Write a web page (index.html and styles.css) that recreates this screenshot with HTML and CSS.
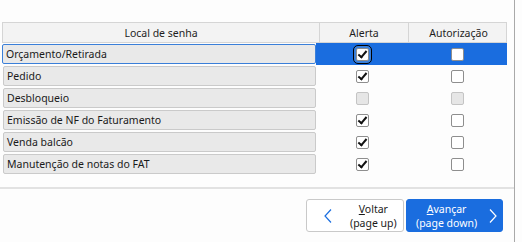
FILE: index.html
```html
<!DOCTYPE html>
<html>
<head>
<meta charset="utf-8">
<link rel="stylesheet" href="styles.css">
</head>
<body>
<div class="panel">
  <div class="grid">
    <div class="head">
      <div class="hc c1">Local de senha</div>
      <div class="hc c2">Alerta</div>
      <div class="hc c3">Autorização</div>
    </div>
    <div class="row sel">
      <div class="lbl focus">Orçamento/Retirada</div>
      <div class="cell"><span class="cb on fcs"></span></div>
      <div class="cell"><span class="cb"></span></div>
    </div>
    <div class="row">
      <div class="lbl">Pedido</div>
      <div class="cell"><span class="cb on"></span></div>
      <div class="cell"><span class="cb"></span></div>
    </div>
    <div class="row">
      <div class="lbl">Desbloqueio</div>
      <div class="cell"><span class="cb dis"></span></div>
      <div class="cell"><span class="cb dis"></span></div>
    </div>
    <div class="row">
      <div class="lbl">Emissão de NF do Faturamento</div>
      <div class="cell"><span class="cb on"></span></div>
      <div class="cell"><span class="cb"></span></div>
    </div>
    <div class="row">
      <div class="lbl">Venda balcão</div>
      <div class="cell"><span class="cb on"></span></div>
      <div class="cell"><span class="cb"></span></div>
    </div>
    <div class="row">
      <div class="lbl">Manutenção de notas do FAT</div>
      <div class="cell"><span class="cb on"></span></div>
      <div class="cell"><span class="cb"></span></div>
    </div>
  </div>
  <div class="footer">
    <button class="btn back">
      <svg class="chev" width="8" height="14" viewBox="0 0 8 14"><path d="M7 0.5 L1 7 L7 13.5" fill="none" stroke="#1a6ee0" stroke-width="1.2"/></svg>
      <span class="btxt"><u>V</u>oltar<br>(page up)</span>
    </button>
    <button class="btn next">
      <span class="btxt"><u>A</u>vançar<br>(page down)</span>
      <svg class="chev" width="8" height="14" viewBox="0 0 8 14"><path d="M1 0.5 L7 7 L1 13.5" fill="none" stroke="#ffffff" stroke-width="1.2"/></svg>
    </button>
  </div>
</div>
</body>
</html>
```
FILE: styles.css
```css
html, body {
  margin: 0;
  padding: 0;
  background: #fdfdfd;
}
body {
  font-family: "Noto Sans", "DejaVu Sans", sans-serif;
  font-size: 10.5px;
  color: #1a1a1a;
}
.panel {
  width: 514px;
  height: 242px;
  border-right: 1px solid #a9a9a9;
  box-sizing: content-box;
  position: relative;
}
.grid {
  padding-top: 22px;
  margin-left: 2px;
  width: 505px;
}
.head {
  display: grid;
  grid-template-columns: 316px 89px 100px;
  height: 21px;
  box-sizing: border-box;
  border: 1px solid #d5d5d5;
  background: #f3f3f3;
}
.hc {
  display: flex;
  align-items: center;
  justify-content: center;
  color: #1e1e1e;
}
.hc.c2, .hc.c3 {
  border-left: 1px solid #d5d5d5;
}
.row {
  display: grid;
  grid-template-columns: 316px 89px 100px;
  height: 22px;
}
.row.sel {
  background: linear-gradient(to right, transparent 314px, #1a6ddf 314px);
}
.lbl {
  margin: 1px 2px 1px 1px;
  height: 20px;
  box-sizing: border-box;
  border: 1px solid #cacaca;
  border-radius: 2px;
  background: #e9e9e9;
  padding-left: 3px;
  display: flex;
  align-items: center;
  white-space: nowrap;
}
.lbl.focus {
  border-color: #3a7fd9;
  margin-left: 0;
}
.cell {
  display: flex;
  align-items: center;
  justify-content: center;
}
.cb {
  width: 13px;
  height: 13px;
  box-sizing: border-box;
  border: 1px solid #8e8e8e;
  border-radius: 2px;
  background: #ffffff;
  position: relative;
}
.cb.dis {
  border-color: #c4c4c4;
  background: #e6e6e6;
}
.cb.on::after {
  content: "";
  position: absolute;
  left: 3px;
  top: 0px;
  width: 3px;
  height: 7px;
  border: solid #111;
  border-width: 0 2px 2px 0;
  transform: rotate(40deg);
}
.cb.fcs {
  outline: 1px solid #000;
  outline-offset: 2px;
  box-shadow: 0 0 0 2px #3a7fd9;
}
.footer {
  margin-top: 12px;
  border-top: 2px solid #e2e2e2;
  display: flex;
  justify-content: flex-end;
  gap: 2px;
  padding-top: 10px;
  padding-right: 11px;
}
.btn {
  width: 97px;
  height: 33px;
  box-sizing: border-box;
  border-radius: 3px;
  font-family: "Noto Sans", "DejaVu Sans", sans-serif;
  font-size: 10.5px;
  line-height: 14px;
  display: flex;
  align-items: center;
  padding: 0;
  margin: 0;
}
.btn.back {
  background: #ffffff;
  border: 1px solid #c9c9c9;
  color: #1a1a1a;
  width: 98px;
}
.btn.next {
  background: #1a6ddf;
  border: 1px solid #1a6ddf;
  color: #ffffff;
}
.btn.back .chev { margin-left: 17px; }
.btn.back .btxt { margin-left: 18px; text-align: center; }
.btn.next .btxt { margin-left: 9px; text-align: center; }
.btn.next .chev { margin-left: 12px; }
```
